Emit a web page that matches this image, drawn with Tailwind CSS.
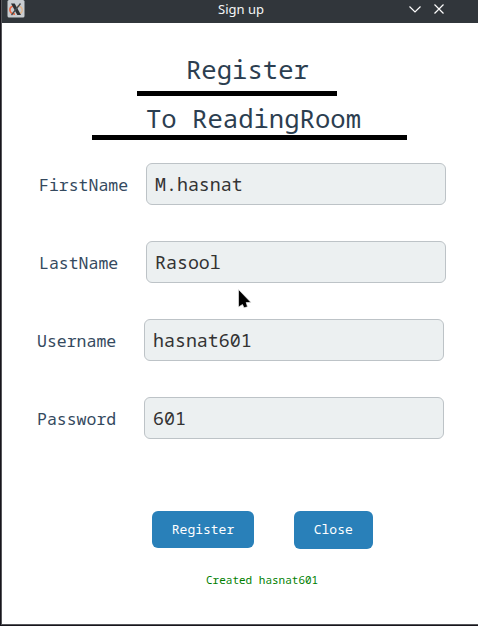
<!DOCTYPE html>
<html lang="en">
<head>
<meta charset="utf-8">
<title>Sign up</title>
<script src="https://cdn.jsdelivr.net/npm/@tailwindcss/browser@4"></script>
</head>
<body class="w-[478px] h-[626px] overflow-hidden bg-[#17151c] font-['Noto_Sans_Mono','Liberation_Mono',monospace]">
<div class="relative flex flex-col w-full h-[625px] border-l border-b border-[#55565a] ml-px bg-white">
  <header class="grid grid-cols-[1fr_auto_1fr] h-[23px] shrink-0 bg-[#31363b] font-['Noto_Sans',sans-serif] text-[13px] leading-[19px] text-[#f5f6f6]">
    <svg class="ml-[5px]" width="19" height="18" viewBox="0 0 19 18" aria-hidden="true">
      <rect x=".5" y="0" width="17" height="17.5" rx="1.5" fill="#c9cdd1"/>
      <path d="M10 6c7 0 7 8 0 8.300" fill="none" stroke="#e3b68c" stroke-width="1.300"/>
      <path d="M6.500 6C1.500 7 1.500 13.500 8 14.200" fill="none" stroke="#ed6540" stroke-width="1.700"/>
      <path d="M4 3.500h3.700l6.300 11.500h-3.700z" fill="#2e3134"/>
      <path d="M13.500 3.500 4.500 15" stroke="#45494c" stroke-width="1.300"/>
    </svg>
    <span class="-mr-px">Sign up</span>
    <div class="flex justify-end pr-[32px]">
      <svg width="42" height="19" viewBox="0 0 42 19" fill="none" stroke="#fcfcfc" stroke-width="1.200" aria-hidden="true"><path d="m4.500 6.500 5.500 5.500 5.500-5.500M29.500 4.500l9 9m0-9-9 9"/></svg>
    </div>
  </header>
  <main class="flex flex-col items-start">
    <h1 class="mt-[27px] ml-[184px] h-[41px] text-[25.6px] leading-[40px] whitespace-pre text-[#2c3e50]">Register</h1>
    <div class="ml-[135px] h-[5px] w-[200px] bg-black"></div>
    <h2 class="mt-[3px] ml-[144px] h-[36px] text-[25.6px] leading-[40px] whitespace-pre text-[#2c3e50]">To ReadingRoom</h2>
    <div class="ml-[90px] h-[5px] w-[315px] bg-black"></div>
    <form class="mt-[23px] flex flex-col gap-9">
      <div class="flex h-[42px] pl-[37px]">
        <label class="w-[107px] text-[16.5px] leading-[44px] text-[#34495e]">FirstName</label>
        <div class="h-[42px] w-[300px] rounded-[6px] border border-[#bdc3c7] bg-[#ecf0f1] pl-2 text-[18.3px] leading-[40px] text-[#333]">M.hasnat</div>
      </div>
      <div class="flex h-[42px] pl-[37px]">
        <label class="w-[107px] text-[16.5px] leading-[44px] text-[#34495e]">LastName</label>
        <div class="h-[42px] w-[300px] rounded-[6px] border border-[#bdc3c7] bg-[#ecf0f1] pl-2 text-[18.3px] leading-[40px] text-[#333]">Rasool</div>
      </div>
      <div class="flex h-[42px] pl-[35px]">
        <label class="w-[107px] text-[16.5px] leading-[44px] text-[#34495e]">Username</label>
        <div class="h-[42px] w-[300px] rounded-[6px] border border-[#bdc3c7] bg-[#ecf0f1] pl-2 text-[18.3px] leading-[40px] text-[#333]">hasnat601</div>
      </div>
      <div class="flex h-[42px] pl-[35px]">
        <label class="w-[107px] text-[16.5px] leading-[44px] text-[#34495e]">Password</label>
        <div class="h-[42px] w-[300px] rounded-[6px] border border-[#bdc3c7] bg-[#ecf0f1] pl-2 text-[18.3px] leading-[40px] text-[#333]">601</div>
      </div>
    </form>
    <div class="mt-[72px] ml-[150px] flex h-[38px] gap-10 text-[13px] text-white">
      <button class="h-[37px] w-[102px] rounded-[6px] bg-[#2980b9]">Register</button>
      <button class="h-[38px] w-[78.5px] rounded-[6px] bg-[#2980b9] pb-px">Close</button>
    </div>
    <p class="mt-[21px] ml-[204px] text-[11px] leading-[20px] whitespace-pre text-[#008000]">Created hasnat601</p>
  </main>
  <svg class="absolute left-[235px] top-[288px]" width="16" height="22" viewBox="0 0 16 22" aria-hidden="true"><path d="M1.500 1.500v17.500l4-2.500 1.500 3.300 3.500-1-1.300-4.300H14z" fill="#000" stroke="#e8e8e8" stroke-width=".7"/></svg>
</div>
</body>
</html>
